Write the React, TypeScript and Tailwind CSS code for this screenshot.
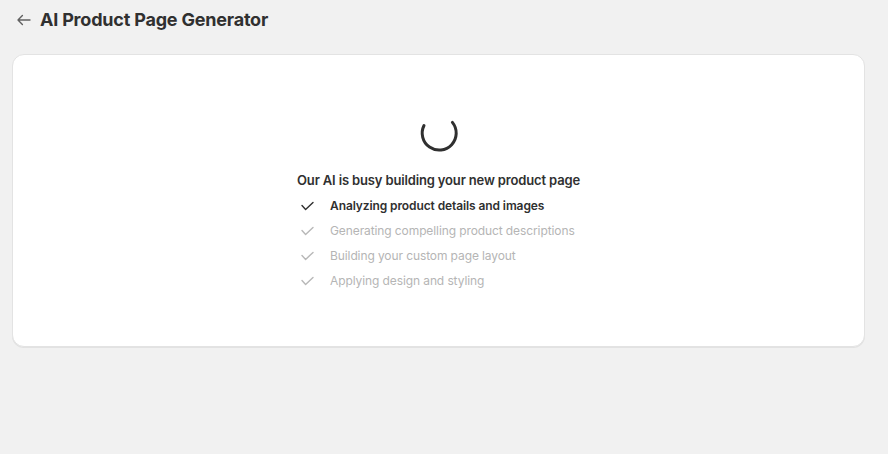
import React from "react";

const steps = [
  { label: "Analyzing product details and images", done: true },
  { label: "Generating compelling product descriptions", done: false },
  { label: "Building your custom page layout", done: false },
  { label: "Applying design and styling", done: false },
];

function CheckMark({ active }: { active: boolean }) {
  return (
    <svg viewBox="0 0 20 20" className="h-5 w-5 shrink-0" aria-hidden="true">
      <path
        d="M5 9.6 8.6 13.4 16 6.4"
        fill="none"
        stroke={active ? "#303030" : "#b8b8b8"}
        strokeWidth="1.4"
        strokeLinecap="round"
        strokeLinejoin="round"
      />
    </svg>
  );
}

function Spinner() {
  // open ring, gap at the top
  return (
    <svg viewBox="0 0 40 40" className="h-10 w-10" aria-hidden="true">
      <path
        d="M5 12.5 A17 17 0 1 0 33.4 9.4"
        fill="none"
        stroke="#303030"
        strokeWidth="3"
        strokeLinecap="round"
      />
    </svg>
  );
}

export default function App() {
  return (
    <div className="min-h-screen bg-[#f1f1f1] pl-3 pr-[23px] pt-2 font-['Inter','Liberation_Sans',sans-serif] text-[#303030]">
      <div className="flex h-6 items-center gap-2">
        <button className="ml-px flex h-5 w-5 items-center justify-center text-[#616161]" aria-label="Back">
          <svg viewBox="0 0 20 20" className="h-5 w-5" aria-hidden="true">
            <path
              d="M17 10H5.2M9.4 5.6 5 10 9.4 14.4"
              fill="none"
              stroke="currentColor"
              strokeWidth="1.4"
              strokeLinecap="round"
              strokeLinejoin="round"
            />
          </svg>
        </button>
        <h1 className="ml-[-1px] text-[18px] font-bold leading-6 tracking-[-0.2px]">AI Product Page Generator</h1>
      </div>

      <div className="mt-[22px] flex flex-col items-center rounded-xl border border-[#e3e3e3] bg-white pb-[55px] pt-[58px] shadow-[0_1px_0_0_rgba(26,26,26,0.07)]">
        <Spinner />
        <div className="mt-[17px] flex flex-col items-start">
          <p className="text-[13px] font-semibold leading-5 tracking-[-0.15px]">
            Our AI is busy building your new product page
          </p>
          <ul className="mt-[6px] flex flex-col gap-[5px]">
            {steps.map((s) => (
              <li key={s.label} className="flex items-center gap-[13px] text-[12px] leading-5 tracking-[-0.1px]">
                <CheckMark active={s.done} />
                <span className={s.done ? "font-semibold text-[#303030]" : "text-[#b5b5b5]"}>{s.label}</span>
              </li>
            ))}
          </ul>
        </div>
      </div>
    </div>
  );
}
